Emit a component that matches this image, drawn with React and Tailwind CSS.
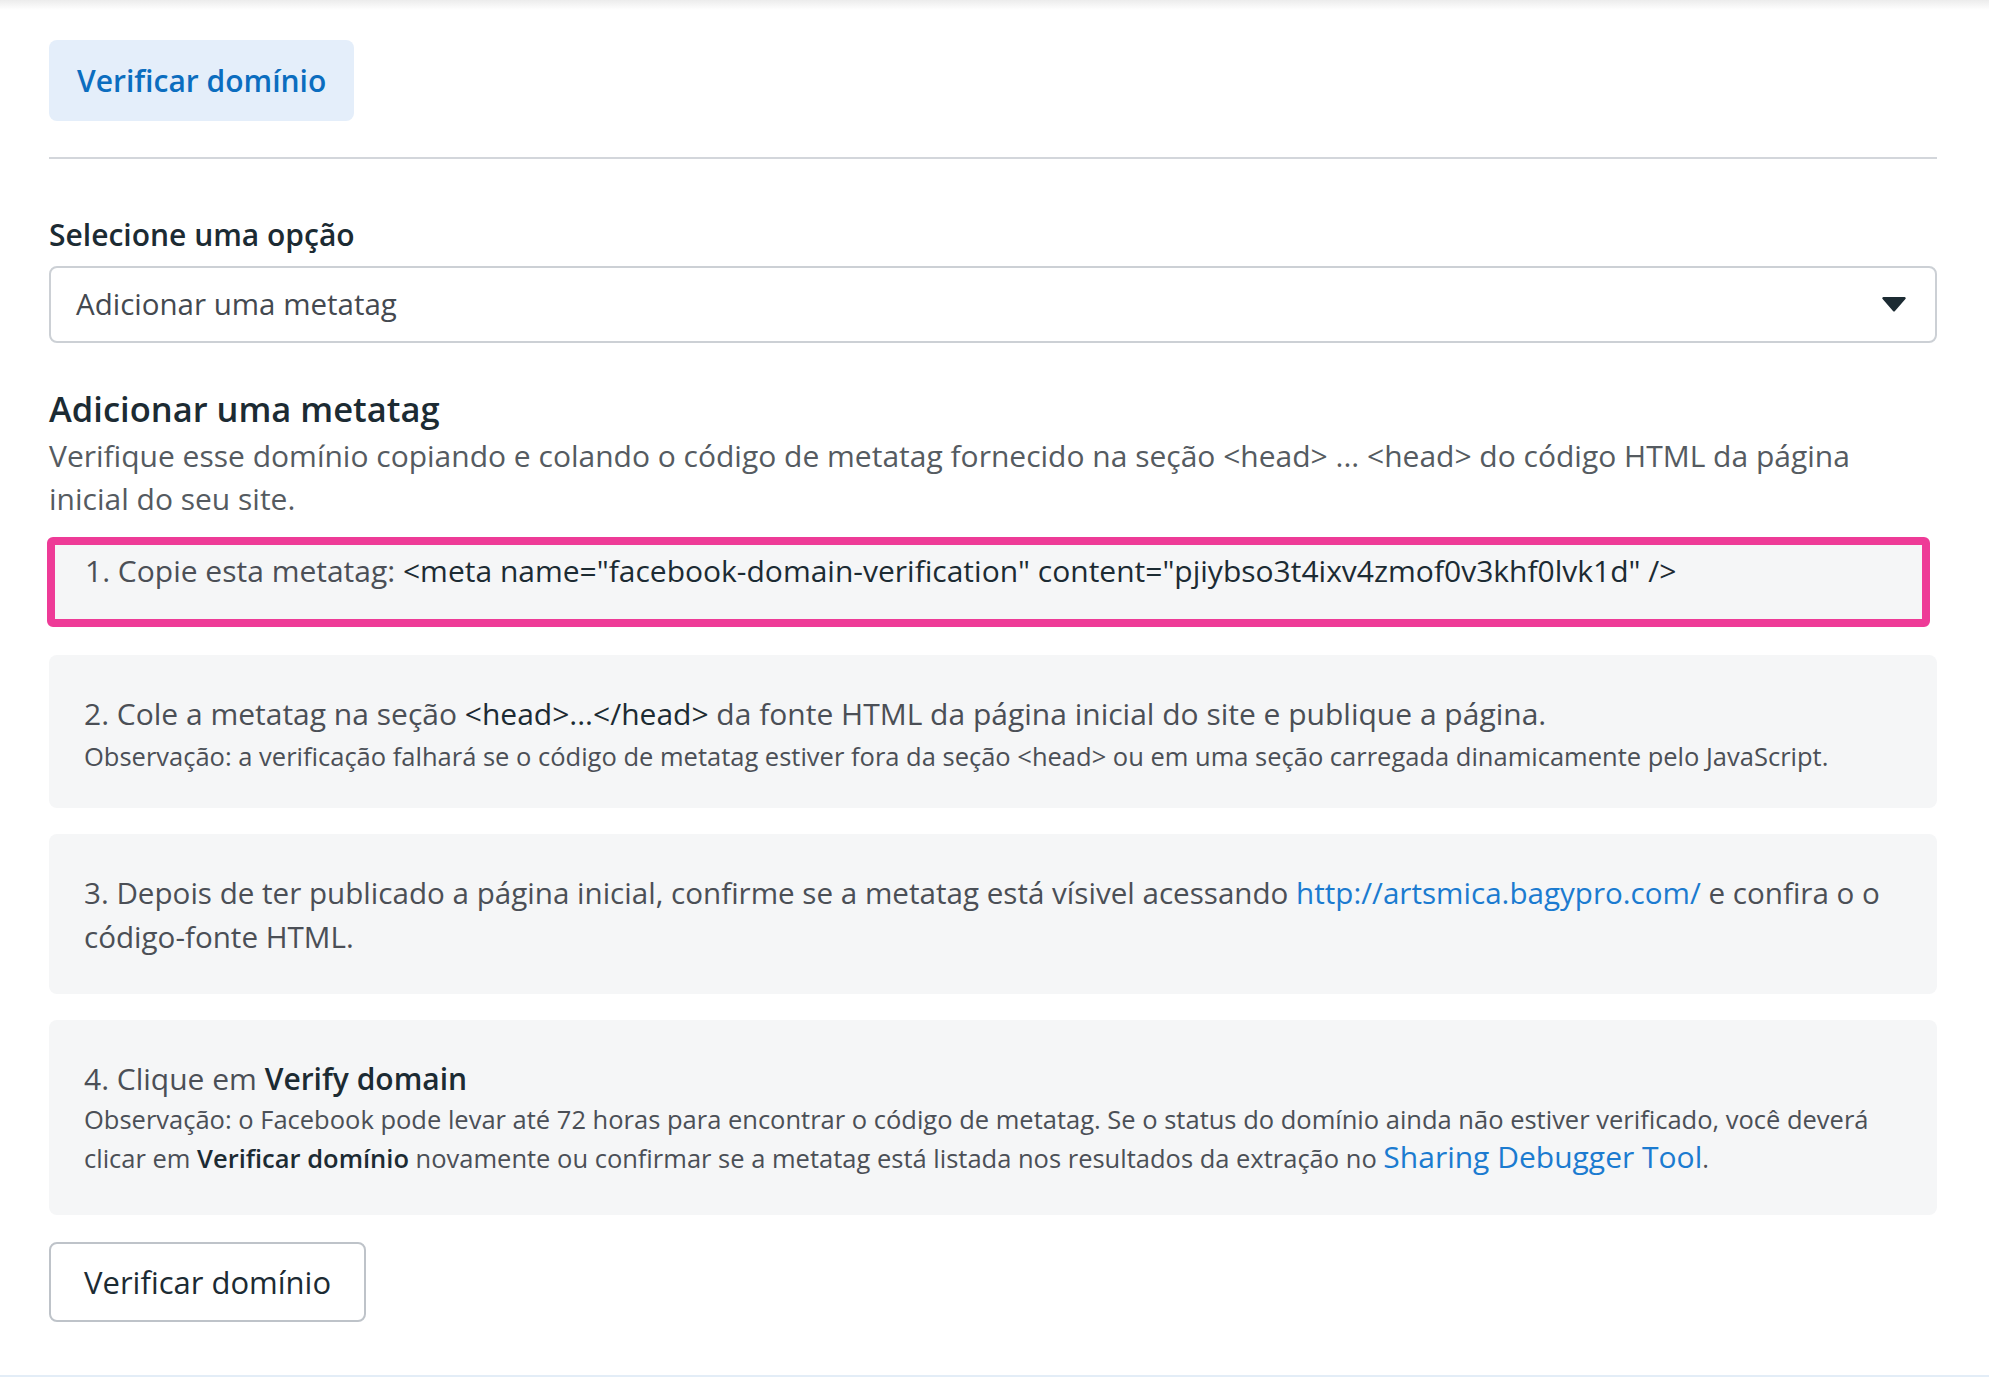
import React from 'react';

const Step = ({ className = '', children }) => (
  <div className={`rounded-lg bg-[#f5f6f7] pl-[35px] pr-[20px] ${className}`}>{children}</div>
);

export default function App() {
  return (
    <div className="flex h-[1377px] flex-col bg-white font-['Open_Sans',sans-serif] text-[#1c1e21]">
      {/* soft shadow from the top bar */}
      <div className="h-[10px] bg-linear-to-b from-[#ececec] to-white" />

      <div className="flex-1 pl-[49px] pr-[52px] pt-[30px]">
        <button className="h-[81px] rounded-lg bg-[#e4eefa] px-[28px] text-[30px] font-semibold text-[#0b6dbf]">
          Verificar domínio
        </button>

        <div className="mt-[36px] h-[2px] bg-[#d3d6db]" />

        <label className="mt-[54px] block text-[30px] leading-[43px] font-semibold text-[#1c2b33]">
          Selecione uma opção
        </label>
        <div className="mt-[10px] flex h-[77px] items-center justify-between rounded-lg border-2 border-[#ccd0d5] pl-[25px] pr-[29px]">
          <span className="text-[29.5px] text-[#444950]">Adicionar uma metatag</span>
          <svg width="24" height="15" viewBox="0 0 24 15">
            <path d="M1.5 0h21a1.2 1.2 0 0 1 .9 2L13 14a1.3 1.3 0 0 1-2 0L.6 2a1.2 1.2 0 0 1 .9-2z" fill="#1c2b33" />
          </svg>
        </div>

        <h2 className="mt-[44px] text-[34.5px] leading-[43px] font-semibold text-[#1c2b33]">Adicionar uma metatag</h2>
        <p className="mt-[4px] text-[30px] leading-[43px] whitespace-nowrap text-[#555b61]">
          Verifique esse domínio copiando e colando o código de metatag fornecido na seção {'<head>'} ... {'<head>'} do código HTML da página
          <br />
          inicial do seu site.
        </p>

        {/* step 1, highlighted */}
        <div className="-ml-[2px] mr-[7px] mt-[17px] h-[90px] rounded-md border-8 border-[#ee3b97] bg-[#f5f6f7] pl-[30px] pt-[4px]">
          <p className="text-[30px] leading-[43px] whitespace-nowrap text-[#4b4f56]">
            1. Copie esta metatag:{' '}
            <span className="font-medium text-[#1c2b33]">{'<meta name="facebook-domain-verification" content="pjiybso3t4ixv4zmof0v3khf0lvk1d" />'}</span>
          </p>
        </div>

        <div className="mt-[28px] flex flex-col gap-[26px]">
          <Step className="pt-[37px] pb-[33px]">
            <p className="text-[30px] leading-[43px] whitespace-nowrap text-[#4b4f56]">
              2. Cole a metatag na seção <span className="font-medium text-[#1c2b33]">{'<head>...</head>'}</span> da fonte HTML da página inicial do site e publique a página.
            </p>
            <p className="mt-[2px] text-[25.5px] leading-[38px] whitespace-nowrap text-[#4b4f56]">
              Observação: a verificação falhará se o código de metatag estiver fora da seção {'<head>'} ou em uma seção carregada dinamicamente pelo JavaScript.
            </p>
          </Step>

          <Step className="pt-[37px] pb-[35px]">
            <p className="text-[29.6px] leading-[44px] whitespace-nowrap text-[#4b4f56]">
              3. Depois de ter publicado a página inicial, confirme se a metatag está vísivel acessando{' '}
              <a href="#" className="text-[#1b7bd0]">http://artsmica.bagypro.com/</a> e confira o o
              <br />
              código-fonte HTML.
            </p>
          </Step>

          <Step className="pt-[37px] pb-[38px]">
            <p className="text-[30px] leading-[43px] text-[#4b4f56]">
              4. Clique em <span className="font-semibold text-[#1c2b33]">Verify domain</span>
            </p>
            <p className="text-[25.5px] leading-[38px] whitespace-nowrap text-[#4b4f56]">
              Observação: o Facebook pode levar até 72 horas para encontrar o código de metatag. Se o status do domínio ainda não estiver verificado, você deverá
              <br />
              clicar em <span className="font-semibold text-[#1c2b33]">Verificar domínio</span> novamente ou confirmar se a metatag está listada nos resultados da extração no{' '}
              <a href="#" className="text-[30px] text-[#1b7bd0]">Sharing Debugger Tool</a>.
            </p>
          </Step>
        </div>

        <button className="mt-[27px] h-[80px] rounded-lg border-2 border-[#bec3c9] px-[33px] text-[31px] text-[#1c2b33]">
          Verificar domínio
        </button>
      </div>

      <div className="h-[2px] bg-[#e3edf7]" />
    </div>
  );
}
